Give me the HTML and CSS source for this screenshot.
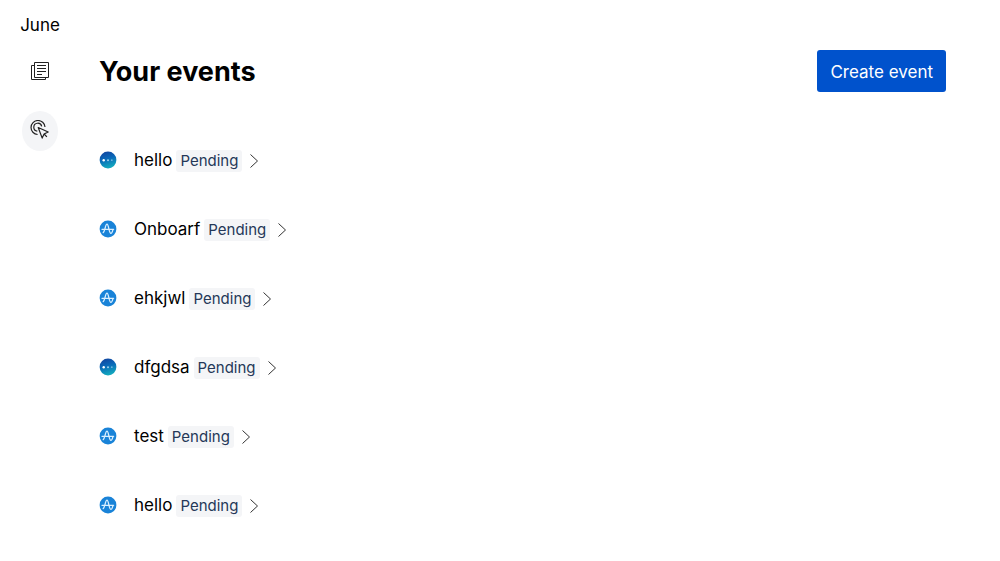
FILE: index.html
```html
<!DOCTYPE html>
<html lang="en">
<head>
  <meta charset="utf-8">
  <title>June - Your events</title>
  <link rel="stylesheet" href="styles.css">
</head>
<body>
  <svg class="sprite" aria-hidden="true">
    <defs>
      <linearGradient id="segmentFill" x1="0" y1="0" x2="0.3" y2="1">
        <stop offset="0" stop-color="#123f9c"/>
        <stop offset="0.5" stop-color="#0a68b8"/>
        <stop offset="1" stop-color="#12a5bd"/>
      </linearGradient>
    </defs>
    <symbol id="segment" viewBox="0 0 18 18">
      <circle cx="9" cy="9" r="8.4" fill="url(#segmentFill)"/>
      <circle cx="4.7" cy="9.2" r="1.2" fill="#fff"/>
      <circle cx="9" cy="9.2" r="1" fill="#9fd0ee"/>
      <circle cx="12.8" cy="9.2" r="0.9" fill="#6fb4df"/>
    </symbol>
    <symbol id="amplitude" viewBox="0 0 18 18">
      <circle cx="9" cy="9" r="8.4" fill="#1983d8"/>
      <path d="M3 9.300h11.600M4.200 12.600C6 11.500 6.300 4.200 8 4.200c1.700 0 2 9.200 3.900 9.200 1.100 0 1.500-1.700 1.900-3.200" fill="none" stroke="#d9efff" stroke-width="1.3" stroke-linecap="round"/>
    </symbol>
    <symbol id="chevron" viewBox="0 0 10 16">
      <path d="M1.500 1.500L8.500 8l-7 6.500" fill="none" stroke="#333" stroke-width="1"/>
    </symbol>
  </svg>

  <aside class="sidebar">
    <a class="brand" href="#">June</a>
    <nav class="nav">
      <a class="nav-link" href="#" aria-label="Reports">
        <svg width="20" height="20" viewBox="0 0 20 20" fill="none" stroke="#222" stroke-width="1">
          <path d="M4.500 1.500h14v15h-14zM4.500 4.500h-3v14h14v-2M7 4.500h9M7 7.500h9M7 10.500h9M7 13.500h5"/>
        </svg>
      </a>
      <a class="nav-link active" href="#" aria-label="Events">
        <svg width="20" height="22" viewBox="0 0 20 22" fill="none" stroke="#222" stroke-width="1.2">
          <path d="M7.600 14.500A7 7 0 1 1 15 7M7.300 11.200A4 4 0 1 1 11.700 6.400"/>
          <path d="M8.200 7.500l4 10.600 1.900-4.100 4.100-2z" fill="#f4f5f7" stroke-linejoin="round"/>
          <path d="M14.100 14l2.800 2.800"/>
        </svg>
      </a>
    </nav>
  </aside>

  <main class="content">
    <header class="header">
      <h1>Your events</h1>
      <button type="button" class="create-button">Create event</button>
    </header>

    <ul class="events">
      <li>
        <a class="event" href="#">
          <svg class="source"><use href="#segment"/></svg>
          <span class="name">hello</span>
          <span class="badge">Pending</span>
          <svg class="chevron"><use href="#chevron"/></svg>
        </a>
      </li>
      <li>
        <a class="event" href="#">
          <svg class="source"><use href="#amplitude"/></svg>
          <span class="name">Onboarf</span>
          <span class="badge">Pending</span>
          <svg class="chevron"><use href="#chevron"/></svg>
        </a>
      </li>
      <li>
        <a class="event" href="#">
          <svg class="source"><use href="#amplitude"/></svg>
          <span class="name">ehkjwl</span>
          <span class="badge">Pending</span>
          <svg class="chevron"><use href="#chevron"/></svg>
        </a>
      </li>
      <li>
        <a class="event" href="#">
          <svg class="source"><use href="#segment"/></svg>
          <span class="name">dfgdsa</span>
          <span class="badge">Pending</span>
          <svg class="chevron"><use href="#chevron"/></svg>
        </a>
      </li>
      <li>
        <a class="event" href="#">
          <svg class="source"><use href="#amplitude"/></svg>
          <span class="name">test</span>
          <span class="badge">Pending</span>
          <svg class="chevron"><use href="#chevron"/></svg>
        </a>
      </li>
      <li>
        <a class="event" href="#">
          <svg class="source"><use href="#amplitude"/></svg>
          <span class="name">hello</span>
          <span class="badge">Pending</span>
          <svg class="chevron"><use href="#chevron"/></svg>
        </a>
      </li>
    </ul>
  </main>
</body>
</html>
```
FILE: styles.css
```css
* {
  box-sizing: border-box;
}

body {
  display: flex;
  margin: 0;
  font-family: Inter, sans-serif;
  font-size: 17px;
  line-height: 24px;
  color: #000;
  background: #fff;
}

a {
  color: inherit;
  text-decoration: none;
}

.sprite {
  position: absolute;
  width: 0;
  height: 0;
}

.sidebar {
  display: flex;
  flex-direction: column;
  align-items: center;
  gap: 14px;
  width: 80px;
  padding-top: 13px;
}

.nav {
  display: flex;
  flex-direction: column;
  gap: 20px;
}

.nav-link {
  display: flex;
  align-items: center;
  justify-content: center;
  width: 36px;
  height: 40px;
  border-radius: 50%;
}

.nav-link.active {
  background: #f4f5f7;
}

.content {
  flex: 1;
  padding: 50px 54px 20px 19px;
}

.header {
  display: flex;
  align-items: center;
  justify-content: space-between;
}

.header h1 {
  margin: 2px 0 0;
  font-size: 27px;
  line-height: 36px;
  font-weight: 700;
}

.create-button {
  height: 42px;
  padding: 1px 13px 0;
  border: none;
  border-radius: 3px;
  background: #0052cc;
  color: #fff;
  font: inherit;
  cursor: pointer;
}

.create-button:hover {
  background: #0065ff;
}

.events {
  margin: 33px 0 0;
  padding: 0;
  list-style: none;
}

.event {
  display: flex;
  align-items: center;
  height: 69px;
}

.source {
  width: 18px;
  height: 18px;
  margin-right: 17px;
}

.badge {
  margin: 2px 7px 0 4px;
  padding: 0 4px;
  border-radius: 3px;
  background: #f4f5f7;
  color: #253858;
  font-size: 15px;
  line-height: 22px;
}

.chevron {
  width: 10px;
  height: 16px;
  margin-top: 2px;
}
```
